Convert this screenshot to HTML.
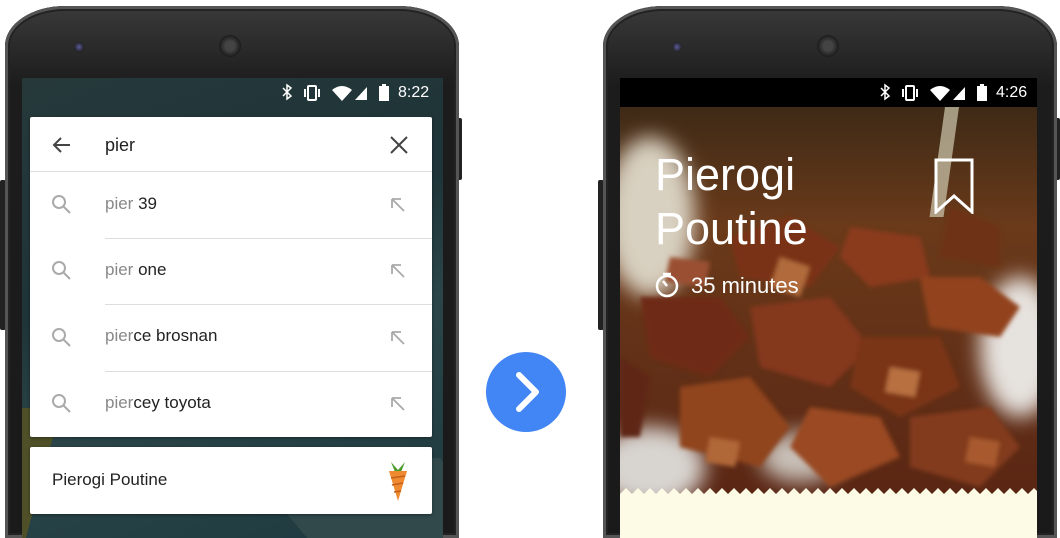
<!DOCTYPE html>
<html><head><meta charset="utf-8"><style>
html,body{margin:0;width:1060px;height:538px;overflow:hidden}
body{background:#fff;font-family:"Liberation Sans",sans-serif}
#w{position:relative;width:1060px;height:538px;overflow:hidden}
.abs{position:absolute}
.phone{position:absolute;top:6px;width:454px;height:532px;border-radius:60px 60px 0 0/40px 40px 0 0;background:linear-gradient(#3a3a3a,#1c1c1c 15%,#1a1a1a);box-shadow:inset 0 0 0 3px #555,inset 0 0 0 5px #222}
.btn{position:absolute;background:#222;border-radius:2px}
.cam{position:absolute;width:10px;height:10px;border-radius:50%;background:radial-gradient(#5a5a9a,#222 70%)}
.spk{position:absolute;width:22px;height:22px;border-radius:50%;background:radial-gradient(#444 30%,#111 80%)}
.row{position:absolute;left:0;width:402px;height:66px;}
.row .t{position:absolute;left:75px;top:22px;font-size:17px;color:#222}
.row .t span{color:#888}
.div{position:absolute;left:75px;right:0;height:1px;background:#ddd}
.sb{position:absolute;color:#fff;font-size:16px}
</style></head><body><div id="w">
<!-- left phone -->
<div class="btn" style="left:0;top:180px;width:6px;height:150px"></div>
<div class="btn" style="left:456px;top:118px;width:6px;height:62px"></div>
<div class="phone" style="left:5px"></div>
<div class="cam" style="left:74px;top:42px"></div>
<div class="spk" style="left:219px;top:35px"></div>
<div class="abs" style="left:22px;top:78px;width:421px;height:460px;overflow:hidden;background:linear-gradient(160deg,#26383a 0%,#1e3438 40%,#2b4548 60%,#1d3a40 100%)">
 <div class="abs" style="left:-20px;top:330px;width:40px;height:140px;background:#4f5028;transform:skewX(-15deg)"></div>
 <div class="abs" style="left:260px;top:380px;width:200px;height:100px;background:#31494b;transform:skewX(40deg)"></div>
</div>
<div class="sb" style="left:398px;top:84px">8:22</div>
<svg class="abs" style="left:280px;top:83px" width="115" height="20" viewBox="0 0 115 20" fill="#fff">
<path d="M3 5l8 8-4 3V2l4 3-8 8" stroke="#fff" stroke-width="1.5" fill="none"/>
<rect x="28" y="3" width="8" height="14" rx="1" fill="none" stroke="#fff" stroke-width="2"/><rect x="24" y="6" width="2" height="8"/><rect x="38" y="6" width="2" height="8"/>
<path d="M52 7q10-8 20 0l-10 11z"/><path d="M75 17h12V4z"/>
<rect x="99" y="3" width="10" height="15"/><rect x="102" y="1" width="4" height="2"/>
</svg>
<div class="abs" style="left:30px;top:117px;width:402px;height:320px;background:#fff;border-radius:2px;box-shadow:0 1px 3px rgba(0,0,0,.4)">
 <svg class="abs" style="left:20px;top:16px" width="24" height="24"><path d="M20 12H5M11 5l-7 7 7 7" stroke="#444" stroke-width="2" fill="none"/></svg>
 <div class="abs" style="left:75px;top:18px;font-size:18px;color:#222">pier</div>
 <svg class="abs" style="left:358px;top:17px" width="22" height="22"><path d="M3 3l16 16M19 3L3 19" stroke="#444" stroke-width="2"/></svg>
 <div class="abs" style="left:0;top:54px;width:402px;height:1px;background:#ddd"></div>
 <div class="row" style="top:55px"><div class="t"><span>pier</span> 39</div></div>
 <div class="div" style="top:121px"></div>
 <div class="row" style="top:121px"><div class="t"><span>pier</span> one</div></div>
 <div class="div" style="top:187px"></div>
 <div class="row" style="top:187px"><div class="t"><span>pier</span>ce brosnan</div></div>
 <div class="div" style="top:254px"></div>
 <div class="row" style="top:254px"><div class="t"><span>pier</span>cey toyota</div></div>
 <svg class="abs" style="left:20px;top:76px" width="24" height="220" fill="none" stroke="#aaa" stroke-width="2">
  <g><circle cx="9" cy="9" r="6"/><path d="M13 13l7 7"/></g>
  <g transform="translate(0,66)"><circle cx="9" cy="9" r="6"/><path d="M13 13l7 7"/></g>
  <g transform="translate(0,133)"><circle cx="9" cy="9" r="6"/><path d="M13 13l7 7"/></g>
  <g transform="translate(0,199)"><circle cx="9" cy="9" r="6"/><path d="M13 13l7 7"/></g>
 </svg>
 <svg class="abs" style="left:360px;top:80px" width="18" height="220" fill="none" stroke="#aaa" stroke-width="1.8">
  <g><path d="M2 2l12 12M2 2v9M2 2h9"/></g>
  <g transform="translate(0,66)"><path d="M2 2l12 12M2 2v9M2 2h9"/></g>
  <g transform="translate(0,133)"><path d="M2 2l12 12M2 2v9M2 2h9"/></g>
  <g transform="translate(0,199)"><path d="M2 2l12 12M2 2v9M2 2h9"/></g>
 </svg>
</div>
<div class="abs" style="left:30px;top:447px;width:402px;height:67px;background:#fff;border-radius:2px;box-shadow:0 1px 3px rgba(0,0,0,.4)">
 <div class="abs" style="left:22px;top:23px;font-size:17px;color:#222">Pierogi Poutine</div>
 <svg class="abs" style="left:356px;top:12px" width="24" height="44"><path d="M5 3l7 8 7-8-4 10H9z" fill="#4a9a2a"/><path d="M3 12h18l-9 30z" fill="#f08a30"/><path d="M5 19l14-2M6 26l11-2M8 33l7-1" stroke="#c0601a" stroke-width="1.5"/></svg>
</div>
<!-- arrow -->
<div class="abs" style="left:486px;top:352px;width:80px;height:80px;border-radius:50%;background:#4285f4"></div>
<svg class="abs" style="left:486px;top:352px" width="80" height="80"><path d="M33 23l17 17-17 17" stroke="#fff" stroke-width="6" fill="none" stroke-linecap="round" stroke-linejoin="round"/></svg>
<!-- right phone -->
<div class="btn" style="left:598px;top:180px;width:6px;height:150px"></div>
<div class="btn" style="left:1054px;top:118px;width:6px;height:62px"></div>
<div class="phone" style="left:603px"></div>
<div class="cam" style="left:672px;top:42px"></div>
<div class="spk" style="left:817px;top:35px"></div>
<div class="abs" style="left:620px;top:78px;width:417px;height:30px;background:#000"></div>
<div class="sb" style="left:996px;top:84px">4:26</div>
<svg class="abs" style="left:878px;top:83px" width="115" height="20" viewBox="0 0 115 20" fill="#fff">
<path d="M3 5l8 8-4 3V2l4 3-8 8" stroke="#fff" stroke-width="1.5" fill="none"/>
<rect x="28" y="3" width="8" height="14" rx="1" fill="none" stroke="#fff" stroke-width="2"/><rect x="24" y="6" width="2" height="8"/><rect x="38" y="6" width="2" height="8"/>
<path d="M52 7q10-8 20 0l-10 11z"/><path d="M75 17h12V4z"/>
<rect x="99" y="3" width="10" height="15"/><rect x="102" y="1" width="4" height="2"/>
</svg>
<div class="abs" style="left:620px;top:107px;width:417px;height:431px;background:#fdfbe6"></div>
<svg class="abs" style="left:620px;top:107px" width="417" height="392" viewBox="0 0 417 392">
<defs><linearGradient id="bg" x1="0" y1="0" x2="0" y2="1"><stop offset="0" stop-color="#3e2a16"/><stop offset=".3" stop-color="#6a3a1a"/><stop offset="1" stop-color="#5a2614"/></linearGradient>
<filter id="bl"><feGaussianBlur stdDeviation="2"/></filter><filter id="bl2"><feGaussianBlur stdDeviation="10"/></filter></defs>
<rect width="417" height="392" fill="url(#bg)"/>
<g filter="url(#bl2)">
<ellipse cx="30" cy="110" rx="45" ry="80" fill="#d8d0c0"/>
<ellipse cx="400" cy="240" rx="40" ry="70" fill="#e6e2de"/>
<ellipse cx="30" cy="360" rx="55" ry="40" fill="#d8d4d0"/>
<ellipse cx="180" cy="350" rx="40" ry="25" fill="#c8c0b8"/>
</g>
<rect x="325" y="0" width="14" height="110" fill="#cfcab0" opacity=".7" transform="skewX(-8)"/>
<g filter="url(#bl)">
<path d="M110 130l60-20 50 30-30 40-70-10z" fill="#7a3218"/>
<path d="M230 120l70 10 10 40-60 10-30-30z" fill="#8a3a1a"/>
<path d="M300 170l60 0 40 30-20 30-70-10z" fill="#92421e"/>
<path d="M20 190l80 0 30 40-40 40-60-20z" fill="#6e2a14"/>
<path d="M130 200l80-10 40 50-40 40-70-20z" fill="#84381c"/>
<path d="M240 230l80 0 20 50-60 30-50-30z" fill="#7a3418"/>
<path d="M60 280l70-10 40 50-30 40-80-20z" fill="#90441e"/>
<path d="M190 300l70 10 20 40-70 30-40-40z" fill="#9a4a22"/>
<path d="M290 310l80-10 30 40-40 40-70-20z" fill="#823a1a"/>
<path d="M0 250l30 20-10 60-20 0z" fill="#5e2612"/>
<path d="M330 100l50 20 0 40-60-10z" fill="#6e3218"/>
<path d="M160 150l30 10-10 30-30-10z" fill="#b06a3a"/>
<path d="M270 260l30 5-5 25-30-5z" fill="#b87040"/>
<path d="M90 330l30 5-5 25-30-5z" fill="#b06838"/>
<path d="M50 150l40 5-5 25-40-5z" fill="#9a5030"/>
<path d="M350 330l30 5-5 25-30-5z" fill="#a85a2e"/>
</g>
</svg>
<svg class="abs" style="left:620px;top:486px" width="417" height="14"><path d="M0 14V8l6-6 6 6 6-6 6 6 6-6 6 6 6-6 6 6 6-6 6 6 6-6 6 6 6-6 6 6 6-6 6 6 6-6 6 6 6-6 6 6 6-6 6 6 6-6 6 6 6-6 6 6 6-6 6 6 6-6 6 6 6-6 6 6 6-6 6 6 6-6 6 6 6-6 6 6 6-6 6 6 6-6 6 6 6-6 6 6 6-6 6 6 6-6 6 6 6-6 6 6 6-6 6 6 6-6 6 6 6-6 6 6 6-6 6 6 6-6 6 6 6-6 6 6 6-6 6 6 6-6 6 6 6-6 6 6 6-6 6 6 6-6 6 6 6-6 6 6 6-6 6 6 6-6 6 6 6-6 6 6 6-6 6 6 6-6 6 6 6-6 6 6 6-6 6 6 6-6 6 6 6-6 6 6 6-6 6 6 6-6 6 6 6-6 6 6 6-6 6 6 6-6 6 6 6-6 6 6 6-6 6 6 6-6 6 6V14z" fill="#fdfbe6"/></svg>
<div class="abs" style="left:655px;top:148px;font-size:45px;line-height:54px;color:#fff;font-weight:300">Pierogi<br>Poutine</div>
<svg class="abs" style="left:934px;top:158px" width="40" height="56"><path d="M2 2h36v52L20 38 2 54z" fill="none" stroke="#fff" stroke-width="3"/></svg>
<svg class="abs" style="left:654px;top:272px" width="26" height="26" fill="none" stroke="#fff" stroke-width="2.5"><circle cx="13" cy="14" r="10"/><path d="M9 2h8M13 14l-4-5"/></svg>
<div class="abs" style="left:691px;top:273px;font-size:22px;color:#fff">35 minutes</div>
</div></body></html>
